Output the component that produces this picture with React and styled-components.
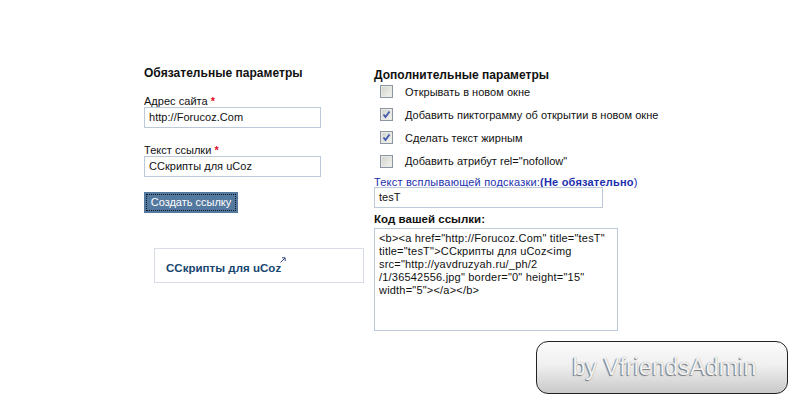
import React from 'react';
import styled, { createGlobalStyle } from 'styled-components';

const Global = createGlobalStyle`
  html, body { margin: 0; padding: 0; background: #fff; }
  body { font-family: "Liberation Sans", Arial, sans-serif; font-size: 11px; letter-spacing: 0.03px; color: #111; }
`;

const Page = styled.div`
  position: relative;
  width: 800px;
  height: 400px;
  overflow: hidden;
  display: flex;
  padding-left: 144px;
  box-sizing: border-box;
`;

const LeftCol = styled.div`
  width: 230px;
  padding-top: 66px;
  display: flex;
  flex-direction: column;
`;

const RightCol = styled.div`
  width: 300px;
  padding-top: 68px;
  display: flex;
  flex-direction: column;
`;

const Heading = styled.div`
  font-weight: bold;
  font-size: ${p => p.$size || 12}px;
  line-height: ${p => p.$h || 14}px;
  height: ${p => p.$h || 14}px;
  margin-bottom: ${p => p.$gap || 0}px;
  white-space: nowrap;
`;

const Label = styled.label`
  display: block;
  line-height: 14px;
  height: 13px;
  white-space: nowrap;
`;

const HintLabel = styled(Label)`
  height: 12px;
  margin-top: 2px;
  letter-spacing: 0.2px;
  color: #1c2fae;
`;

const Star = styled.span`
  color: #e0102a;
  font-weight: bold;
`;

const TextField = styled.div`
  box-sizing: border-box;
  width: ${p => p.$w}px;
  height: 21px;
  border: 1px solid #bcc9d8;
  padding: 0 4px;
  line-height: 19px;
  background: #fff;
  margin-bottom: ${p => p.$mb || 0}px;
`;

const Submit = styled.button`
  box-sizing: border-box;
  width: 94px;
  height: 21px;
  padding: 0;
  margin-top: 15px;
  border: none;
  outline: 1px dotted #0c1420;
  outline-offset: -3px;
  background: #54799f;
  color: #fff;
  font: inherit;
  line-height: 21px;
`;

const Preview = styled.div`
  box-sizing: border-box;
  width: 210px;
  height: 35px;
  margin: 35px 0 0 10px;
  padding: 12px 0 0 11px;
  border: 1px solid #d8dce8;
  line-height: 14px;
`;

const PreviewLink = styled.a`
  position: relative;
  font-size: 11.5px;
  font-weight: bold;
  color: #17466f;
`;

const LinkMark = styled.svg`
  position: absolute;
  right: -5px;
  top: -5px;
  width: 6px;
  height: 6px;
`;

const OptionList = styled.div`
  display: flex;
  flex-direction: column;
  margin-top: -2px;
`;

const Option = styled.div`
  display: flex;
  align-items: center;
  height: 23.2px;
  padding-left: 6px;
  white-space: nowrap;
`;

const Check = styled.span`
  box-sizing: border-box;
  flex-shrink: 0;
  width: 13px;
  height: 13px;
  margin-right: 12px;
  border: 1px solid #8b96a2;
  box-shadow: inset 0 0 0 1px #e9e9e6;
  background: linear-gradient(135deg, #d2d2cc, #f4f4f0);
  display: flex;
  align-items: center;
  justify-content: center;
`;

const CodeBox = styled.div`
  box-sizing: border-box;
  width: 244px;
  height: 103px;
  border: 1px solid #bcc9d8;
  padding: 3px 4px;
  line-height: 13px;
  letter-spacing: 0.2px;
  white-space: pre;
`;

const Badge = styled.div`
  position: absolute;
  left: 536px;
  top: 341px;
  width: 252px;
  height: 53px;
  box-sizing: border-box;
  padding-left: 5px;
  border: 1px solid #222;
  border-radius: 12px;
  background: linear-gradient(#fbfbfb 0%, #f0f0f0 45%, #c9c9c9 100%);
  display: flex;
  align-items: center;
  justify-content: center;
  font-size: 23.5px;
  letter-spacing: 0;
  color: #f2f2f2;
  text-shadow: -1px 1px 1px #777, 0 0 1px #999;
`;

const options = [
  { text: 'Открывать в новом окне', on: false },
  { text: 'Добавить пиктограмму об открытии в новом окне', on: true },
  { text: 'Сделать текст жирным', on: true },
  { text: 'Добавить атрибут rel="nofollow"', on: false },
];

const code = `<b><a href="http://Forucoz.Com" title="tesT"
title="tesT">ССкрипты для uCoz<img
src="http://yavdruzyah.ru/_ph/2
/1/36542556.jpg" border="0" height="15"
width="5"></a></b>`;

export default function App() {
  return (
    <Page>
      <Global />
      <LeftCol>
        <Heading $gap={14}>Обязательные параметры</Heading>
        <Label>Адрес сайта <Star>*</Star></Label>
        <TextField $w={177} $mb={15}>http://Forucoz.Com</TextField>
        <Label>Текст ссылки <Star>*</Star></Label>
        <TextField $w={177}>ССкрипты для uCoz</TextField>
        <Submit>Создать ссылку</Submit>
        <Preview>
          <PreviewLink>
            ССкрипты для uCoz
            <LinkMark viewBox="0 0 6 6">
              <path d="M0.5 5.5L5 1M2 0.8H5.2V4" fill="none" stroke="#3c4a80" strokeWidth="1" />
            </LinkMark>
          </PreviewLink>
        </Preview>
      </LeftCol>
      <RightCol>
        <Heading>Дополнительные параметры</Heading>
        <OptionList>
          {options.map(o => (
            <Option key={o.text}>
              <Check>
                {o.on && (
                  <svg width="9" height="9" viewBox="0 0 9 9">
                    <path d="M1.5 4.5L3.5 7L7.5 1.5" fill="none" stroke="#3f58ad" strokeWidth="1.8" />
                  </svg>
                )}
              </Check>
              {o.text}
            </Option>
          ))}
        </OptionList>
        <HintLabel>Текст всплывающей подсказки:<b>(Не обязательно</b>)</HintLabel>
        <TextField $w={229} $mb={5}>tesT</TextField>
        <Heading $h={13} $size={11.5} $gap={2}>Код вашей ссылки:</Heading>
        <CodeBox>{code}</CodeBox>
      </RightCol>
      <Badge>by VfriendsAdmin</Badge>
    </Page>
  );
}
